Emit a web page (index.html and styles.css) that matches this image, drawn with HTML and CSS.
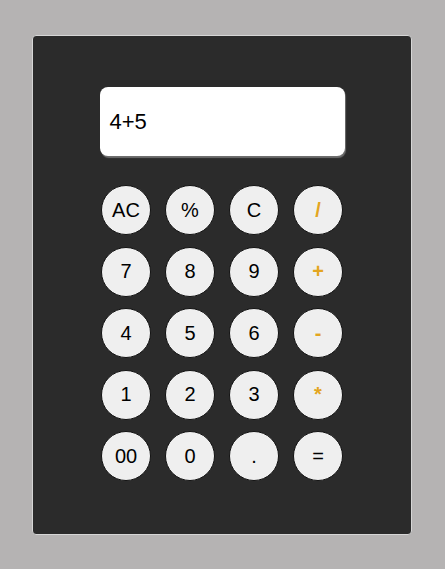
FILE: index.html
```html
<!DOCTYPE html>
<html>
<head>
<meta charset="utf-8">
<link rel="stylesheet" href="styles.css">
</head>
<body>
<div class="calculator">
  <div class="display">4+5</div>
  <div class="keys">
    <button class="key">AC</button>
    <button class="key">%</button>
    <button class="key">C</button>
    <button class="key op">/</button>
    <button class="key">7</button>
    <button class="key">8</button>
    <button class="key">9</button>
    <button class="key op">+</button>
    <button class="key">4</button>
    <button class="key">5</button>
    <button class="key">6</button>
    <button class="key op">-</button>
    <button class="key">1</button>
    <button class="key">2</button>
    <button class="key">3</button>
    <button class="key op">*</button>
    <button class="key">00</button>
    <button class="key">0</button>
    <button class="key">.</button>
    <button class="key">=</button>
  </div>
</div>
</body>
</html>
```
FILE: styles.css
```css
html, body {
  margin: 0;
  padding: 0;
}
body {
  background: #b5b3b3;
  font-family: "Liberation Sans", Arial, sans-serif;
  padding: 35px 0 0 32px;
  height: 569px;
  box-sizing: border-box;
}
.calculator {
  width: 380px;
  height: 500px;
  box-sizing: border-box;
  background: #2b2b2b;
  border: 1px solid #d6d6d6;
  border-radius: 4px;
  display: flex;
  flex-direction: column;
  align-items: center;
  padding-top: 51px;
}
.display {
  width: 245px;
  height: 69px;
  box-sizing: border-box;
  background: #ffffff;
  border-radius: 8px;
  box-shadow: 1px 2px 1px #6e6e6e;
  font-size: 22px;
  color: #000;
  padding-left: 10px;
  display: flex;
  align-items: center;
  padding-top: 1px;
}
.keys {
  margin-top: 29px;
  display: grid;
  grid-template-columns: repeat(4, 50px);
  grid-auto-rows: 50px;
  column-gap: 14px;
  row-gap: 11.5px;
}
.key {
  width: 50px;
  height: 50px;
  margin: 0;
  padding: 0;
  border-radius: 50%;
  border: 1px solid #111;
  background: #efefef;
  font-family: "Liberation Sans", Arial, sans-serif;
  font-size: 20px;
  color: #000;
  display: flex;
  align-items: center;
  justify-content: center;
}
.key.op {
  color: #e3a520;
  font-weight: bold;
}
```
